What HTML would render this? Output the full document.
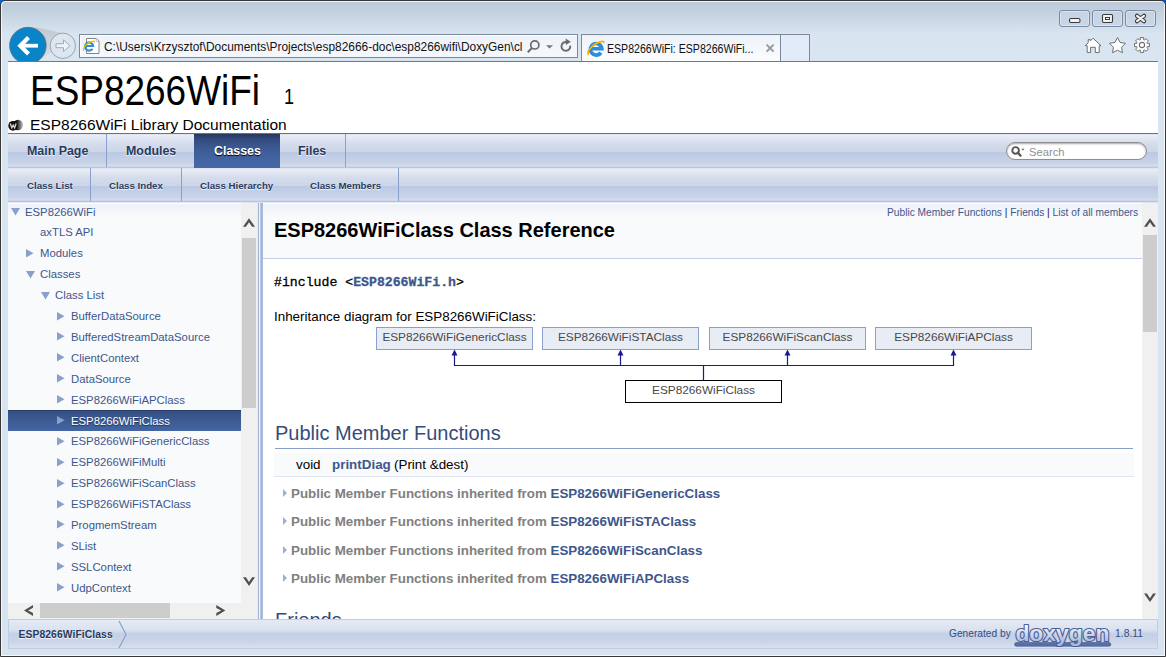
<!DOCTYPE html>
<html><head><meta charset="utf-8">
<style>
*{margin:0;padding:0;box-sizing:border-box}
html,body{width:1166px;height:657px;overflow:hidden}
body{position:relative;font-family:"Liberation Sans",sans-serif;background:#d6e2ef}
.a{position:absolute;white-space:nowrap}
svg.a{overflow:visible}
.tabs{position:absolute;left:8px;width:1150px;height:34px;
 background:linear-gradient(#dfe4ef 0.5px,#e8ecf6 1.5px,#e6eaf5 3px,#d5dcec 9.5px,#ccd6e8 17.5px,#bac8e2 18px,#c3cfe6 24px,#c8d3e8 29px,#d6dded 32px,#b8c6e0 33.5px)}
.tab{position:absolute;top:1px;height:33px;font-weight:bold;color:#283a5d;font-size:12.4px;line-height:33px;text-shadow:0 1px 1px rgba(255,255,255,.9)}
.sub{font-size:9.7px}
.sep{position:absolute;top:0;width:1px;height:33px;background:#8aa0cc}
.tl{font-size:11.33px;line-height:14px}
.sel{background:linear-gradient(#1d2b4a 0px,#344f84 1px,#3c5a92 10px,#4466a4 21px)}
.chev{position:absolute}
</style></head><body>
<!-- window frame -->
<div class="a" style="left:0;top:0;width:8px;height:8px;background:#0a64d8"></div>
<div class="a" style="left:1158px;top:0;width:8px;height:8px;background:#0a50c0"></div>
<div class="a" style="left:0;top:0;width:1166px;height:657px;border:1px solid #383838;border-radius:5px 5px 0 0;box-shadow:inset 1px 1px 0 rgba(255,255,255,.75),inset -1px -1px 0 rgba(255,255,255,.75);background:linear-gradient(#bccad9 2px,#cad7e4 18px,#d8e5f1 33px,#d9e6f2 62px,#d7e3ef 657px)"></div>

<!-- page white -->
<div class="a" style="left:8px;top:62px;width:1150px;height:71px;background:#fff"></div>

<!-- header -->
<div class="a" style="left:29.5px;top:66.5px;font-size:42px;line-height:48px;color:#000;transform:scaleX(0.88);transform-origin:0 0">ESP8266WiFi</div>
<div class="a" style="left:283.5px;top:85px;font-size:22px;line-height:24px;color:#000;transform:scaleX(0.82);transform-origin:0 0">1</div>
<div class="a" style="left:30px;top:116px;font-size:15.5px;line-height:18px;color:#000">ESP8266WiFi Library Documentation</div>
<div class="a" style="left:8px;top:133px;width:1150px;height:1px;background:#5373b4"></div>

<!-- main tabs -->
<div class="tabs" style="top:134px">
  <div class="tab" style="left:19px">Main Page</div>
  <div class="sep" style="left:98px"></div>
  <div class="tab" style="left:118px">Modules</div>
  <div class="a" style="left:186px;top:0;width:86px;height:34px;background:linear-gradient(#26385f 0px,#344d80 6px,#3f5e9a 18px,#4768a8 33px)"></div>
  <div class="tab" style="left:206px;color:#fff;text-shadow:0 1px 1px #000">Classes</div>
  <div class="tab" style="left:290px">Files</div>
  <div class="sep" style="left:337px"></div>
</div>
<!-- sub tabs -->
<div class="tabs" style="top:168px">
  <div class="tab sub" style="left:19px">Class List</div>
  <div class="sep" style="left:82px"></div>
  <div class="tab sub" style="left:101px">Class Index</div>
  <div class="sep" style="left:173px"></div>
  <div class="tab sub" style="left:192px">Class Hierarchy</div>
  <div class="tab sub" style="left:302px">Class Members</div>
  <div class="sep" style="left:390px"></div>
</div>

<!-- nav tree -->
<div class="a" style="left:8px;top:202px;width:1150px;height:1px;background:#dfe5f0"></div>
<div class="a" style="left:8px;top:203px;width:233px;height:400px;background:linear-gradient(#fff 0px,#fff 1px,#eef1f8 1px,#f9fafc 14px)"></div>
<div class="a tl" style="left:25px;top:204.50px;color:#3d578c">ESP8266WiFi</div>
<svg class="a" style="left:11px;top:208px" width="10" height="8"><path d="M0 0 L9 0 L4.5 7.5 Z" fill="#8aa0cc"/></svg>
<div class="a tl" style="left:40px;top:225.40px;color:#3d578c">axTLS API</div>
<div class="a tl" style="left:40px;top:246.30px;color:#3d578c">Modules</div>
<svg class="a" style="left:26px;top:249px" width="8" height="9"><path d="M0 0 L7.5 4.25 L0 8.5 Z" fill="#8aa0cc"/></svg>
<div class="a tl" style="left:40px;top:267.20px;color:#3d578c">Classes</div>
<svg class="a" style="left:26px;top:271px" width="10" height="8"><path d="M0 0 L9 0 L4.5 7.5 Z" fill="#8aa0cc"/></svg>
<div class="a tl" style="left:55px;top:288.10px;color:#3d578c">Class List</div>
<svg class="a" style="left:41px;top:292px" width="10" height="8"><path d="M0 0 L9 0 L4.5 7.5 Z" fill="#8aa0cc"/></svg>
<div class="a tl" style="left:71px;top:309.00px;color:#3d578c">BufferDataSource</div>
<svg class="a" style="left:57px;top:312px" width="8" height="9"><path d="M0 0 L7.5 4.25 L0 8.5 Z" fill="#8aa0cc"/></svg>
<div class="a tl" style="left:71px;top:329.90px;color:#3d578c">BufferedStreamDataSource</div>
<svg class="a" style="left:57px;top:332px" width="8" height="9"><path d="M0 0 L7.5 4.25 L0 8.5 Z" fill="#8aa0cc"/></svg>
<div class="a tl" style="left:71px;top:350.80px;color:#3d578c">ClientContext</div>
<svg class="a" style="left:57px;top:353px" width="8" height="9"><path d="M0 0 L7.5 4.25 L0 8.5 Z" fill="#8aa0cc"/></svg>
<div class="a tl" style="left:71px;top:371.70px;color:#3d578c">DataSource</div>
<svg class="a" style="left:57px;top:374px" width="8" height="9"><path d="M0 0 L7.5 4.25 L0 8.5 Z" fill="#8aa0cc"/></svg>
<div class="a tl" style="left:71px;top:392.60px;color:#3d578c">ESP8266WiFiAPClass</div>
<svg class="a" style="left:57px;top:395px" width="8" height="9"><path d="M0 0 L7.5 4.25 L0 8.5 Z" fill="#8aa0cc"/></svg>
<div class="a sel" style="left:8px;top:410px;width:233px;height:21px"></div>
<div class="a tl" style="left:71px;top:413.50px;color:#fff;text-shadow:0 1px 1px rgba(0,0,0,.5)">ESP8266WiFiClass</div>
<svg class="a" style="left:57px;top:416px" width="8" height="9"><path d="M0 0 L7.5 4.25 L0 8.5 Z" fill="#8aa0cc"/></svg>
<div class="a tl" style="left:71px;top:434.40px;color:#3d578c">ESP8266WiFiGenericClass</div>
<svg class="a" style="left:57px;top:437px" width="8" height="9"><path d="M0 0 L7.5 4.25 L0 8.5 Z" fill="#8aa0cc"/></svg>
<div class="a tl" style="left:71px;top:455.30px;color:#3d578c">ESP8266WiFiMulti</div>
<svg class="a" style="left:57px;top:458px" width="8" height="9"><path d="M0 0 L7.5 4.25 L0 8.5 Z" fill="#8aa0cc"/></svg>
<div class="a tl" style="left:71px;top:476.20px;color:#3d578c">ESP8266WiFiScanClass</div>
<svg class="a" style="left:57px;top:479px" width="8" height="9"><path d="M0 0 L7.5 4.25 L0 8.5 Z" fill="#8aa0cc"/></svg>
<div class="a tl" style="left:71px;top:497.10px;color:#3d578c">ESP8266WiFiSTAClass</div>
<svg class="a" style="left:57px;top:500px" width="8" height="9"><path d="M0 0 L7.5 4.25 L0 8.5 Z" fill="#8aa0cc"/></svg>
<div class="a tl" style="left:71px;top:518.00px;color:#3d578c">ProgmemStream</div>
<svg class="a" style="left:57px;top:520px" width="8" height="9"><path d="M0 0 L7.5 4.25 L0 8.5 Z" fill="#8aa0cc"/></svg>
<div class="a tl" style="left:71px;top:538.90px;color:#3d578c">SList</div>
<svg class="a" style="left:57px;top:541px" width="8" height="9"><path d="M0 0 L7.5 4.25 L0 8.5 Z" fill="#8aa0cc"/></svg>
<div class="a tl" style="left:71px;top:559.80px;color:#3d578c">SSLContext</div>
<svg class="a" style="left:57px;top:562px" width="8" height="9"><path d="M0 0 L7.5 4.25 L0 8.5 Z" fill="#8aa0cc"/></svg>
<div class="a tl" style="left:71px;top:580.70px;color:#3d578c">UdpContext</div>
<svg class="a" style="left:57px;top:583px" width="8" height="9"><path d="M0 0 L7.5 4.25 L0 8.5 Z" fill="#8aa0cc"/></svg>

<!-- content -->
<div class="a" style="left:263px;top:203px;width:879px;height:416px;background:#fff"></div>
<div class="a" style="left:263px;top:203px;width:879px;height:56px;background:linear-gradient(#fff 0px,#fff 1px,#eef1f8 1px,#f9fafc 14px);border-bottom:1px solid #c4cfe5"></div>
<div class="a" style="left:887px;top:207px;font-size:10.2px;line-height:12px;color:#3d578c">Public Member Functions <span style="color:#222">|</span> Friends <span style="color:#222">|</span> List of all members</div>
<div class="a" style="left:274px;top:217.6px;font-size:21px;line-height:24px;font-weight:bold;color:#000;transform:scaleX(0.952);transform-origin:0 0">ESP8266WiFiClass Class Reference</div>
<div class="a" style="left:274px;top:276px;font-family:'Liberation Mono',monospace;font-size:13.2px;-webkit-text-stroke-width:0.3px;line-height:14px;color:#000">#include &lt;<b style="color:#3d578c">ESP8266WiFi.h</b>&gt;</div>
<div class="a" style="left:274px;top:309.7px;font-size:13.4px;line-height:14px;color:#000">Inheritance diagram for ESP8266WiFiClass:</div>
<div class="a" style="left:376px;top:327px;width:157px;height:23px;background:#e8ecf5;border:1px solid #8aa0cc;font-size:11.8px;line-height:19px;text-align:center;color:#484848">ESP8266WiFiGenericClass</div>
<div class="a" style="left:542px;top:327px;width:157px;height:23px;background:#e8ecf5;border:1px solid #8aa0cc;font-size:11.8px;line-height:19px;text-align:center;color:#484848">ESP8266WiFiSTAClass</div>
<div class="a" style="left:709px;top:327px;width:157px;height:23px;background:#e8ecf5;border:1px solid #8aa0cc;font-size:11.8px;line-height:19px;text-align:center;color:#484848">ESP8266WiFiScanClass</div>
<div class="a" style="left:875px;top:327px;width:157px;height:23px;background:#e8ecf5;border:1px solid #8aa0cc;font-size:11.8px;line-height:19px;text-align:center;color:#484848">ESP8266WiFiAPClass</div>
<div class="a" style="left:625px;top:380px;width:157px;height:23px;background:#fff;border:1px solid #000;font-size:11.8px;line-height:19px;text-align:center;color:#484848">ESP8266WiFiClass</div>
<svg class="a" style="left:0;top:0" width="1166" height="657">
<g stroke="#1a1a8f" stroke-width="1.2" fill="none"><path d="M454.5 352 V365.5 H953.5 V352 M620.5 352 V365.5 M787.5 352 V365.5 M703.5 365.5 V380"/></g>
<g fill="#1a1a8f"><path d="M451.5 355.5 L454.5 349.5 L457.5 355.5Z M617.5 355.5 L620.5 349.5 L623.5 355.5Z M784.5 355.5 L787.5 349.5 L790.5 355.5Z M950.5 355.5 L953.5 349.5 L956.5 355.5Z"/></g></svg>
<div class="a" style="left:275px;top:421px;font-size:20px;line-height:24px;color:#354c7b">Public Member Functions</div>
<div class="a" style="left:275px;top:448px;width:858px;height:1px;background:#879ecb"></div>
<div class="a" style="left:274px;top:453px;width:860px;height:23px;background:#f9fafc"></div>
<div class="a" style="left:274px;top:476px;width:860px;height:1px;background:#dee4f0"></div>
<div class="a" style="left:296px;top:457px;font-size:13.4px;line-height:15px;color:#000">void</div>
<div class="a" style="left:332px;top:457px;font-size:13.4px;line-height:15px;color:#3d578c;font-weight:bold">printDiag</div>
<div class="a" style="left:394px;top:457px;font-size:13.4px;line-height:15px;color:#000">(Print &amp;dest)</div>
<svg class="a" style="left:283px;top:489px" width="5" height="8"><path d="M0 0 L4 4 L0 8Z" fill="#9cafd4"/></svg>
<div class="a" style="left:291px;top:486.0px;font-size:13.35px;line-height:15px;font-weight:bold;color:#808080">Public Member Functions inherited from <span style="color:#3d578c">ESP8266WiFiGenericClass</span></div>
<svg class="a" style="left:283px;top:517px" width="5" height="8"><path d="M0 0 L4 4 L0 8Z" fill="#9cafd4"/></svg>
<div class="a" style="left:291px;top:514.3px;font-size:13.35px;line-height:15px;font-weight:bold;color:#808080">Public Member Functions inherited from <span style="color:#3d578c">ESP8266WiFiSTAClass</span></div>
<svg class="a" style="left:283px;top:546px" width="5" height="8"><path d="M0 0 L4 4 L0 8Z" fill="#9cafd4"/></svg>
<div class="a" style="left:291px;top:542.6px;font-size:13.35px;line-height:15px;font-weight:bold;color:#808080">Public Member Functions inherited from <span style="color:#3d578c">ESP8266WiFiScanClass</span></div>
<svg class="a" style="left:283px;top:574px" width="5" height="8"><path d="M0 0 L4 4 L0 8Z" fill="#9cafd4"/></svg>
<div class="a" style="left:291px;top:570.9px;font-size:13.35px;line-height:15px;font-weight:bold;color:#808080">Public Member Functions inherited from <span style="color:#3d578c">ESP8266WiFiAPClass</span></div>
<div class="a" style="left:275px;top:608px;font-size:20px;line-height:24px;color:#354c7b">Friends</div>


<!-- scrollbars -->
<div class="a" style="left:241px;top:203px;width:16px;height:400px;background:#f0f0f0"></div>
<div class="a" style="left:242px;top:238px;width:14px;height:170px;background:#cdcdcd"></div>
<div class="a" style="left:8px;top:603px;width:249px;height:16px;background:#f0f0f0"></div>
<div class="a" style="left:40px;top:603px;width:130px;height:15px;background:#cdcdcd"></div>
<div class="a" style="left:1142px;top:203px;width:16px;height:416px;background:#f0f0f0"></div>
<div class="a" style="left:1143px;top:235px;width:14px;height:97px;background:#cdcdcd"></div>
<svg class="a" style="left:0;top:0" width="1166" height="657"><g fill="#505050"><path d="M1144.00 226.80 L1150.00 218.20 L1156.00 226.80 L1153.10 226.80 L1150.00 222.16 L1146.90 226.80 Z"/><path d="M1144.00 593.50 L1150.00 602.10 L1156.00 593.50 L1153.10 593.50 L1150.00 598.14 L1146.90 593.50 Z"/><path d="M243.00 226.80 L249.00 218.20 L255.00 226.80 L252.10 226.80 L249.00 222.16 L245.90 226.80 Z"/><path d="M243.00 577.30 L249.00 585.90 L255.00 577.30 L252.10 577.30 L249.00 581.94 L245.90 577.30 Z"/><path d="M33.00 604.90 L24.00 610.40 L33.00 615.90 L33.00 613.00 L28.14 610.40 L33.00 607.80 Z"/><path d="M216.30 605.00 L225.30 610.50 L216.30 616.00 L216.30 613.10 L221.16 610.50 L216.30 607.90 Z"/></g></svg>
<!-- splitter -->
<div class="a" style="left:257px;top:203px;width:6px;height:416px;background:linear-gradient(90deg,#e6ebf4 0,#e6ebf4 1px,#a3b4d6 1px,#a3b4d6 2px,#f0f3f9 2px,#f0f3f9 3px,#c3cfe6 3px,#99acd3 5px,#b9c6e2 6px)"></div>
<!-- footer -->
<div class="a" style="left:8px;top:619px;width:1150px;height:30px;border:1px solid #c2cde4;background:linear-gradient(#e5eaf4 0px,#dae1f0 10px,#c5d0e6 14px,#cbd5e9 22px,#d9e0ef 28px)"></div>
<div class="a" style="left:18.5px;top:628.5px;font-size:10.3px;line-height:12px;font-weight:bold;color:#283a5d;letter-spacing:0.1px;text-shadow:0 1px 1px rgba(255,255,255,.9)">ESP8266WiFiClass</div>
<svg class="a" style="left:118px;top:620px" width="10" height="29"><path d="M1 1 L8 14.5 L1 28" stroke="#8aa0cc" stroke-width="1.2" fill="none"/></svg>
<div class="a" style="left:949px;top:628px;font-size:10.2px;line-height:12px;color:#364d7c">Generated by</div>
<svg class="a" style="left:1008px;top:618px" width="110" height="32">
 <defs><linearGradient id="dg" x1="0" y1="0" x2="0" y2="1"><stop offset="0.2" stop-color="#f6f8fc"/><stop offset="0.85" stop-color="#aab9dc"/></linearGradient></defs>
 <rect x="6.6" y="24.6" width="96.2" height="3.6" rx="1.6" fill="#5671a8" stroke="#41568a" stroke-width="0.6"/>
 <text x="7.4" y="22.9" textLength="94" lengthAdjust="spacingAndGlyphs" font-family="Liberation Sans" font-weight="bold" font-size="22.5" fill="url(#dg)" stroke="#4a5f92" stroke-width="2.2" paint-order="stroke" stroke-linejoin="round">doxygen</text>
</svg>
<div class="a" style="left:1115px;top:628px;font-size:10.4px;line-height:12px;color:#364d7c">1.8.11</div>

<!-- search box -->
<div class="a" style="left:1006px;top:142px;width:141px;height:18px;border-radius:9px;background:#fff;border:1px solid #8f8f8f;box-shadow:inset 0 1px 2px rgba(0,0,0,.35)"></div>
<svg class="a" style="left:1011px;top:145px" width="18" height="14"><circle cx="4.6" cy="5.4" r="3.3" stroke="#555" stroke-width="1.9" fill="none"/><path d="M6.8 7.8 L9.5 10.6" stroke="#555" stroke-width="2.3" stroke-linecap="round"/><path d="M10.5 3.8 L13.5 3.8 L12 5.6Z" fill="#555"/></svg>
<div class="a" style="left:1029px;top:146px;font-size:11.2px;line-height:13px;color:#909090">Search</div>

<!-- logo small -->
<svg class="a" style="left:8px;top:119px" width="16" height="13"><defs><linearGradient id="wg" x1="0" y1="0" x2="1" y2="0"><stop offset="0.35" stop-color="#111"/><stop offset="1" stop-color="#c8c8c8"/></linearGradient></defs>
<ellipse cx="10" cy="6" rx="5" ry="5.3" fill="url(#wg)"/><ellipse cx="5" cy="6.8" rx="4.7" ry="4.9" fill="#111"/>
<path d="M2.3 4.6 L3.8 8.8 L5.2 6.2 L6.6 8.8 L8.1 4.6" stroke="#d0d0d0" stroke-width="1.4" fill="none"/></svg>

<!-- browser chrome -->

<svg class="a" style="left:0;top:0;overflow:hidden" width="1166" height="61">
 <defs><linearGradient id="tail" x1="0" y1="0" x2="0" y2="1"><stop offset="0" stop-color="#c3c9cf"/><stop offset="1" stop-color="#d5dde6"/></linearGradient></defs>
 <path d="M28 27 C40 27, 48 30, 62 33 L62 45 L40 60 Z" fill="url(#tail)"/>
 <circle cx="62.8" cy="45.8" r="12.7" fill="#dce6f1" stroke="#9aa3ac" stroke-width="1"/>
 <path d="M56 43.7 h7.5 v-3.8 l6.5 5.8 l-6.5 5.8 v-3.8 h-7.5 Z" fill="#eef3f9" stroke="#9aa3ac" stroke-width="0.9"/>
 <circle cx="27.9" cy="45.6" r="18.3" fill="#0984c8" stroke="#5f6f80" stroke-width="0.8"/>
 <path d="M20 45.7 H38" stroke="#fff" stroke-width="3.8"/><path d="M28.5 37.5 L20.3 45.7 L28.5 53.9" stroke="#fff" stroke-width="4.2" fill="none"/>
</svg>
<div class="a" style="left:8px;top:61px;width:1150px;height:1px;background:#6c7a88"></div>
<!-- address bar -->
<div class="a" style="left:79px;top:34px;width:499px;height:24px;border:1px solid #7a8a9a;background:linear-gradient(#eef3f9,#f5f8fc)"></div>
<div class="a" style="left:80px;top:35px;width:497px;height:22px;border:1px solid #fff;border-right:none;border-bottom:none"></div>
<svg class="a" style="left:80px;top:34px" width="24" height="24">
 <path d="M6.5 4.5 H16.5 L19 7 V19.5 H6.5 Z" fill="#fff" stroke="#858585" stroke-width="1"/>
 <path d="M16 4.5 V7.5 H19" fill="#eee" stroke="#bbb" stroke-width="0.8"/>
 <g transform="translate(9.2 12.3)">
  <path d="M-3.9 -0.3 H4 A4.1 4.1 0 1 0 3.3 2.6" stroke="#2f8fd8" stroke-width="2.1" fill="none"/>
  <path d="M-5.4 4.3 C-7 1, -1 -4.5, 4.2 -5.2 C5.3 -5.3, 5.4 -4.8, 5 -4" stroke="#f2c000" stroke-width="1.3" fill="none"/>
 </g></svg>
<div class="a" style="left:104px;top:40px;font-size:12.6px;line-height:15px;color:#111;transform:scaleX(0.946);transform-origin:0 0">C:&#92;Users&#92;Krzysztof&#92;Documents&#92;Projects&#92;esp82666-doc&#92;esp8266wifi&#92;DoxyGen&#92;cl</div>
<svg class="a" style="left:525px;top:37px" width="50" height="20">
 <circle cx="9.8" cy="7.9" r="4.1" stroke="#6a6a6a" stroke-width="1.7" fill="none"/><path d="M7 10.9 L2.8 15.2" stroke="#6a6a6a" stroke-width="2"/>
 <path d="M21 8.2 L28 8.2 L24.5 11.4Z" fill="#777"/>
 <path d="M45.2 8.6 A4.4 4.4 0 1 1 42.2 5.2" stroke="#6a6a6a" stroke-width="1.9" fill="none"/><path d="M40.6 1.6 L45.8 4.8 L40.9 8Z" fill="#6a6a6a"/>
</svg>
<!-- tab -->
<div class="a" style="left:581px;top:34px;width:200px;height:27px;border:1px solid #7a8a9a;border-bottom:none;background:linear-gradient(#edf2f9,#fbfcfe)"></div>
<svg class="a" style="left:586px;top:39px" width="20" height="20">
 <g transform="translate(10.2 10) scale(1.45)">
  <path d="M-3.7 -0.2 H3.9 A4 4 0 1 0 3.2 2.5" stroke="#2b8ddc" stroke-width="2.5" fill="none"/>
  <path d="M-5.4 4.3 C-7 1, -1 -4.5, 4.2 -5.2 C5.3 -5.3, 5.4 -4.8, 5 -4" stroke="#f5b400" stroke-width="1.2" fill="none"/>
 </g></svg>
<div class="a" style="left:607px;top:42px;font-size:12.6px;line-height:15px;color:#111;transform:scaleX(0.84);transform-origin:0 0">ESP8266WiFi: ESP8266WiFi...</div>
<svg class="a" style="left:764px;top:42px" width="12" height="12"><path d="M2.6 2.6 L9.6 9.6 M9.6 2.6 L2.6 9.6" stroke="#999" stroke-width="2"/></svg>
<div class="a" style="left:780px;top:34px;width:30px;height:27px;border:1px solid #7a8a9a;border-bottom:none;background:#e1ecf8"></div>
<div class="a" style="left:8px;top:61px;width:1150px;height:1px;background:#6c7a88"></div>
<!-- window buttons -->
<div class="a" style="left:1059px;top:10px;width:31px;height:17px;border:1px solid #7b8aa6;border-radius:3px;box-shadow:inset 0 0 0 1px rgba(255,255,255,.35);background:linear-gradient(#c6d3e2,#c9d6e5)"></div>
<div class="a" style="left:1092px;top:10px;width:31px;height:17px;border:1px solid #7b8aa6;border-radius:3px;box-shadow:inset 0 0 0 1px rgba(255,255,255,.35);background:linear-gradient(#c6d3e2,#c9d6e5)"></div>
<div class="a" style="left:1125px;top:10px;width:31px;height:17px;border:1px solid #7b8aa6;border-radius:3px;box-shadow:inset 0 0 0 1px rgba(255,255,255,.35);background:linear-gradient(#c6d3e2,#c9d6e5)"></div>
<svg class="a" style="left:0;top:0" width="1166" height="62">
 <rect x="1069.5" y="18.5" width="10.5" height="4" rx="1.5" fill="#f2f2f2" stroke="#3a3a3a" stroke-width="1.1"/>
 <rect x="1102.5" y="14.5" width="10" height="8" rx="1.2" fill="#f2f2f2" stroke="#3a3a3a" stroke-width="1.1"/><rect x="1105.5" y="17.5" width="4" height="2" fill="#fff" stroke="#3a3a3a" stroke-width="1"/>
 <path d="M1137 15.8 L1144 21.2 M1144 15.8 L1137 21.2" stroke="#333" stroke-width="4.2" stroke-linecap="round"/>
 <path d="M1137 15.8 L1144 21.2 M1144 15.8 L1137 21.2" stroke="#f2f2f2" stroke-width="2.2" stroke-linecap="round"/>
  <!-- home -->
 <path d="M1093 38.2 L1101 45.7 L1099.2 45.7 V52.5 H1095.3 V47.3 H1090.6 V52.5 H1087.2 V45.7 H1085.2 L1088.2 42.8 V39.6 H1090.3 V40.9 Z" fill="#fff" stroke="#707070" stroke-width="1" stroke-linejoin="round"/>
 <path d="M1117.50 37.50 L1120.03 42.42 L1125.49 43.30 L1121.59 47.23 L1122.44 52.70 L1117.50 50.20 L1112.56 52.70 L1113.41 47.23 L1109.51 43.30 L1114.97 42.42 Z" fill="#fff" stroke="#707070" stroke-width="1" stroke-linejoin="round"/>
 <path d="M1147.26 43.39 L1149.41 43.29 L1149.41 46.71 L1147.26 46.61 L1146.86 47.58 L1148.45 49.03 L1146.03 51.45 L1144.58 49.86 L1143.61 50.26 L1143.71 52.41 L1140.29 52.41 L1140.39 50.26 L1139.42 49.86 L1137.97 51.45 L1135.55 49.03 L1137.14 47.58 L1136.74 46.61 L1134.59 46.71 L1134.59 43.29 L1136.74 43.39 L1137.14 42.42 L1135.55 40.97 L1137.97 38.55 L1139.42 40.14 L1140.39 39.74 L1140.29 37.59 L1143.71 37.59 L1143.61 39.74 L1144.58 40.14 L1146.03 38.55 L1148.45 40.97 L1146.86 42.42 Z" fill="#fff" stroke="#707070" stroke-width="1" stroke-linejoin="round"/><circle cx="1142.0" cy="45.0" r="2.6" fill="#fff" stroke="#707070" stroke-width="1.1"/>
</svg>
</body></html>
